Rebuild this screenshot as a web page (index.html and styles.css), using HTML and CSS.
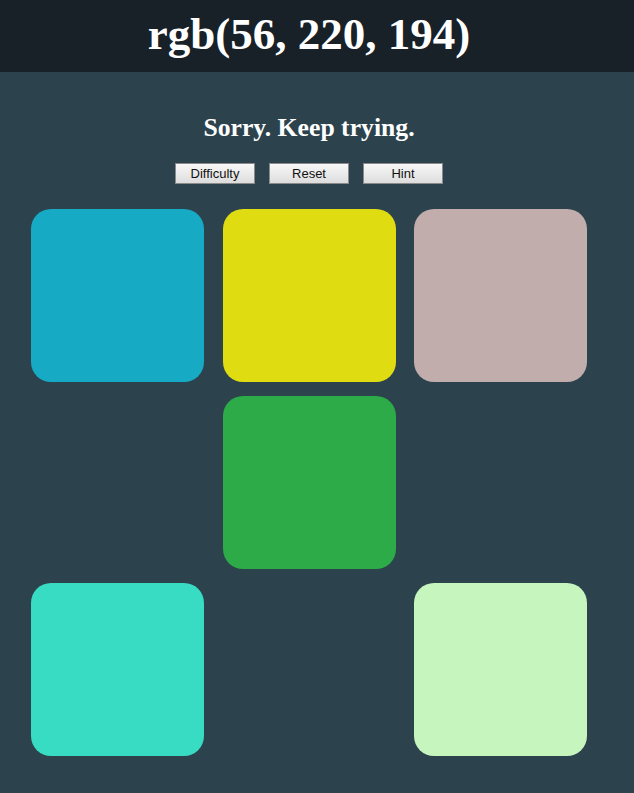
FILE: index.html
```html
<!DOCTYPE html>
<html>
<head>
<meta charset="utf-8">
<link rel="stylesheet" href="styles.css">
</head>
<body>
<header class="top">
  <h1 class="title">rgb(56, 220, 194)</h1>
</header>
<main class="game">
  <h2 class="message">Sorry. Keep trying.</h2>
  <div class="controls">
    <button class="btn">Difficulty</button>
    <button class="btn">Reset</button>
    <button class="btn">Hint</button>
  </div>
  <div class="grid">
    <div class="square c1"></div>
    <div class="square c2"></div>
    <div class="square c3"></div>
    <div class="square empty"></div>
    <div class="square c4"></div>
    <div class="square empty"></div>
    <div class="square c5"></div>
    <div class="square empty"></div>
    <div class="square c6"></div>
  </div>
</main>
</body>
</html>
```
FILE: styles.css
```css
html, body {
  margin: 0;
  padding: 0;
}
body {
  background: #2c434e;
  font-family: "Liberation Serif", "Times New Roman", serif;
  color: #fff;
  height: 793px;
  overflow: hidden;
}
.top {
  background: #182028;
  height: 72px;
  padding-right: 16px;
  display: flex;
  align-items: center;
  justify-content: center;
}
.title {
  margin: 0;
  font-size: 45px;
  font-weight: bold;
  line-height: 1;
  padding-bottom: 4px;
}
.game {
  display: flex;
  flex-direction: column;
  padding-right: 16px;
}
.message {
  margin: 42px 0 0;
  text-align: center;
  font-size: 25.7px;
  line-height: 28px;
  font-weight: bold;
}
.controls {
  display: flex;
  justify-content: center;
  gap: 14px;
  margin-top: 21px;
}
.btn {
  width: 80px;
  height: 21px;
  padding: 0;
  font-family: "Liberation Sans", Arial, sans-serif;
  font-size: 13px;
  color: #111;
  background: linear-gradient(#f8f8f8, #dddddd);
  border: 1px solid #8a8a8a;
  border-radius: 0;
}
.grid {
  display: grid;
  grid-template-columns: repeat(3, 173px);
  grid-auto-rows: 173px;
  column-gap: 18.5px;
  row-gap: 14px;
  padding-left: 31px;
  margin-top: 25px;
}
.square {
  border-radius: 20px;
}
.c1 { background: #16aac5; }
.c2 { background: #e0dc12; }
.c3 { background: #c1adab; }
.c4 { background: #2cab48; }
.c5 { background: #38dcc2; }
.c6 { background: #c6f5be; }
```
